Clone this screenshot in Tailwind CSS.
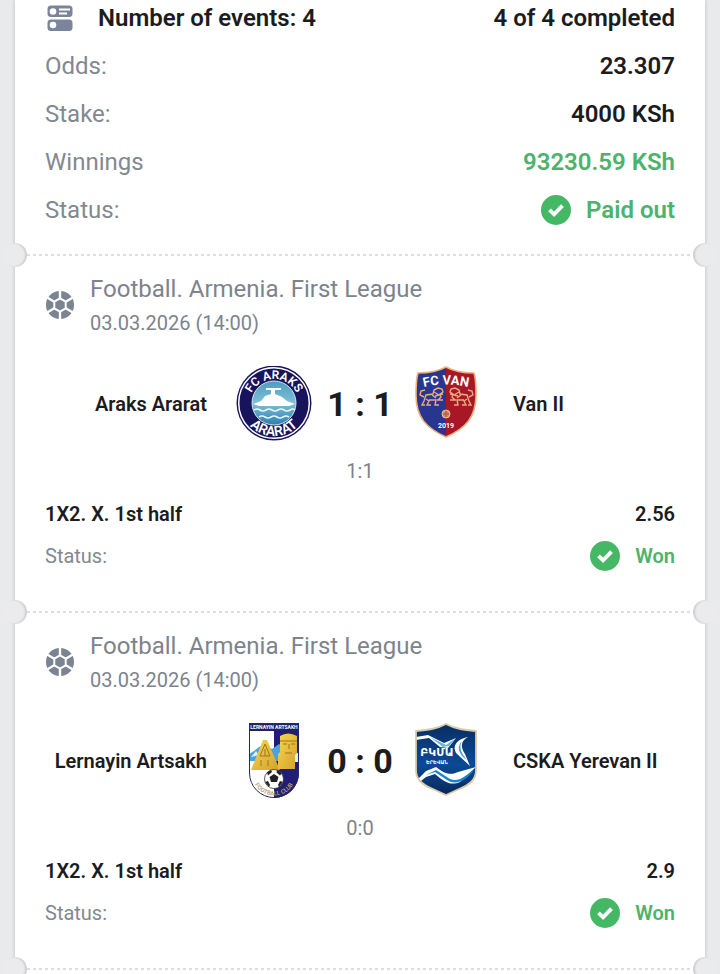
<!DOCTYPE html>
<html lang="en">

<head>
  <meta charset="UTF-8">
  <meta name="viewport" content="width=device-width, initial-scale=1.0">
  <title>Bet slip</title>
  <script src="https://cdn.jsdelivr.net/npm/@tailwindcss/browser@4"></script>
</head>

<body class="bg-[#e9eaec] font-['Roboto',sans-serif] text-[#1c1c1e]">
  <!-- Shared icons -->
  <svg class="hidden">
    <symbol id="check" viewBox="0 0 30 30">
      <circle cx="15" cy="15" r="15" fill="#45b865" />
      <path d="M8.500 14.800l4.600 4.500 8.400-8.600" fill="none" stroke="#fff" stroke-width="3.800" />
    </symbol>
    <symbol id="ball" viewBox="0 0 28 28">
      <circle cx="14" cy="14" r="14" fill="#7b8492" />
      <path d="M14 7.400l5.700 3.300v6.600L14 20.600l-5.700-3.300v-6.600z" fill="#7b8492" stroke="#fff" stroke-width="2" />
      <path d="M14 7.400V0M14 20.600V28M8.300 10.700L1.500 6.800M19.700 10.700L26.500 6.800M8.300 17.300L1.500 21.200M19.700 17.300L26.500 21.200" stroke="#fff" stroke-width="2.400" />
    </symbol>
  </svg>

  <div class="min-h-screen overflow-hidden px-[15px]">
    <main class="min-h-screen bg-white shadow-[0_0_4px_rgba(0,0,0,0.2)]">

      <!-- Summary -->
      <section class="px-[30px] pb-5 text-2xl">
        <div class="mb-[6px] flex h-9 items-center font-semibold">
          <svg class="mr-[25px] ml-[2px] h-[26px] w-[26px]" viewBox="0 0 26 26">
            <rect x="0.500" y="0.500" width="25" height="11.500" rx="3.500" fill="#7b8498" />
            <rect x="0.500" y="14.500" width="25" height="11.500" rx="3.500" fill="#7b8498" />
            <circle cx="6" cy="6.500" r="3.300" fill="#fff" />
            <circle cx="6" cy="20" r="3.300" fill="#fff" />
            <path d="M12 4.500h11M12 8.500h8" stroke="#fff" stroke-width="1.800" />
          </svg>
          <h1>Number of events: 4</h1>
          <span class="ml-auto">4 of 4 completed</span>
        </div>
        <dl>
          <div class="flex h-12 items-center justify-between">
            <dt class="text-[#83888f]">Odds:</dt>
            <dd class="font-semibold">23.307</dd>
          </div>
          <div class="flex h-12 items-center justify-between">
            <dt class="text-[#83888f]">Stake:</dt>
            <dd class="font-semibold">4000 KSh</dd>
          </div>
          <div class="flex h-12 items-center justify-between">
            <dt class="text-[#83888f]">Winnings</dt>
            <dd class="font-semibold text-[#4db36b]">93230.59 KSh</dd>
          </div>
          <div class="flex h-12 items-center justify-between">
            <dt class="text-[#83888f]">Status:</dt>
            <dd class="flex items-center gap-[15px] font-semibold text-[#4db36b]">
              <svg class="size-[30px]"><use href="#check" /></svg>
              Paid out
            </dd>
          </div>
        </dl>
      </section>

      <!-- Tear line -->
      <div class="relative px-3">
        <div class="h-[2px] bg-[repeating-linear-gradient(90deg,#dedede_0_3px,transparent_3px_6px)]"></div>
        <span class="absolute -top-[11px] -left-3 size-6 rounded-full bg-[#ebebed] shadow-[inset_-2px_0_2px_rgba(0,0,0,0.12)]"></span>
        <span class="absolute -top-[11px] -right-3 size-6 rounded-full bg-[#ebebed] shadow-[inset_2px_0_2px_rgba(0,0,0,0.12)]"></span>
      </div>

      <!-- Event 1 -->
      <section class="px-[30px] pt-4 pb-[39px] text-xl">
        <div class="flex items-center gap-4">
          <svg class="ml-px size-7"><use href="#ball" /></svg>
          <div class="text-[#7d838c]">
            <h2 class="text-2xl leading-[34px]">Football. Armenia. First League</h2>
            <p class="mt-[2px] leading-[30px]">03.03.2026 (14:00)</p>
          </div>
        </div>
        <div class="mt-7 grid grid-cols-[1fr_96px_1fr] items-center font-semibold">
          <div class="flex items-center justify-end gap-[29px]">
            <span>Araks Ararat</span>
            <svg class="size-[76px]" viewBox="0 0 76 76">
              <defs>
                <linearGradient id="lake" x1="0" y1="0" x2="0" y2="1">
                  <stop offset="0" stop-color="#4d9cc0" />
                  <stop offset="0.500" stop-color="#7fc0d6" />
                  <stop offset="1" stop-color="#2d7fb0" />
                </linearGradient>
                <path id="araksTop" d="M13.500 43a25 25 0 1 1 49 0" />
                <path id="araksBottom" d="M5 37a33 33 0 0 0 66 0" />
              </defs>
              <circle cx="38" cy="37" r="37.500" fill="#17145c" />
              <circle cx="38" cy="37" r="35.300" fill="#17145c" stroke="#fff" stroke-width="1.500" />
              <circle cx="38" cy="37" r="22" fill="url(#lake)" stroke="#cfe6f0" stroke-width="1" />
              <path d="M17 38l8-3 4-5 6-2v-4h-5v-2h15v2h-6v4l7 3 5 4 8 3-6 2H23z" fill="#fff" />
              <path d="M18 44q3-2 6 0t6 0 6 0 6 0 6 0 6 0 5 0M23 51q3-2 6 0t6 0 6 0 6 0 6 0" fill="none" stroke="#e8f6fb" stroke-width="1.600" />
              <g fill="#fff" font-size="12" font-weight="600" text-anchor="middle">
                <text><textPath href="#araksTop" startOffset="50%">FC ARAKS</textPath></text>
                <text font-size="14"><textPath href="#araksBottom" startOffset="50%">ARARAT</textPath></text>
              </g>
            </svg>
          </div>
          <strong class="text-center text-[34px] leading-10 font-bold">1 : 1</strong>
          <div class="flex items-center gap-[29px]">
            <svg class="size-[76px]" viewBox="0 0 76 76">
              <defs>
                <clipPath id="vanShield"><path d="M38 1c9 5 18 6 28 6 2 6 2 13 2 22 0 22-10 33-30 42C18 62 8 51 8 29c0-9 0-16 2-22 10 0 19-1 28-6z" /></clipPath>
                <path id="vanArc" d="M12 22q26-7 52 0" />
              </defs>
              <g clip-path="url(#vanShield)">
                <path d="M0 0h38v76H0z" fill="#28368f" />
                <path d="M38 0h38v76H38z" fill="#a81726" />
              </g>
              <path d="M38 1c9 5 18 6 28 6 2 6 2 13 2 22 0 22-10 33-30 42C18 62 8 51 8 29c0-9 0-16 2-22 10 0 19-1 28-6z" fill="none" stroke="#eeb079" stroke-width="1.600" />
              <g id="lion" fill="none" stroke="#e9aa80" stroke-width="1.400">
                <path d="M30 22l4 1 1 3-3 2 1 3-3 3M30 22l-4 2-1 4-7 1-2 6-2 4h3M26 26l5 3M27 30l8-2M29 34l6 0M18 33l3 2-2 4h4M21 34l7 0-1 5h4M16 31l-4-2 1-4 4-1M24 29l4 3" />
              </g>
              <use href="#lion" transform="matrix(-1 0 0 1 77 0)" />
              <circle cx="38" cy="48" r="4" fill="#d88d68" stroke="#efbd91" />
              <path d="M35 48h6M38 45v6" stroke="#a84f4f" />
              <g fill="#fff" font-weight="700" text-anchor="middle">
                <text font-size="13"><textPath href="#vanArc" startOffset="50%">FC VAN</textPath></text>
                <text x="38" y="62" font-size="7">2019</text>
              </g>
            </svg>
            <span>Van II</span>
          </div>
        </div>
        <p class="mt-[15px] text-center leading-7 text-[#7d838c]">1:1</p>
        <div class="mt-[15px] flex justify-between leading-7 font-semibold">
          <h3>1X2. X. 1st half</h3>
          <span>2.56</span>
        </div>
        <div class="mt-3 flex h-8 items-center justify-between">
          <span class="text-[#83888f]">Status:</span>
          <span class="flex items-center gap-[15px] font-semibold text-[#4db36b]">
            <svg class="size-[30px]"><use href="#check" /></svg>
            Won
          </span>
        </div>
      </section>

      <!-- Tear line -->
      <div class="relative px-3">
        <div class="h-[2px] bg-[repeating-linear-gradient(90deg,#dedede_0_3px,transparent_3px_6px)]"></div>
        <span class="absolute -top-[11px] -left-3 size-6 rounded-full bg-[#ebebed] shadow-[inset_-2px_0_2px_rgba(0,0,0,0.12)]"></span>
        <span class="absolute -top-[11px] -right-3 size-6 rounded-full bg-[#ebebed] shadow-[inset_2px_0_2px_rgba(0,0,0,0.12)]"></span>
      </div>

      <!-- Event 2 -->
      <section class="px-[30px] pt-4 pb-[39px] text-xl">
        <div class="flex items-center gap-4">
          <svg class="ml-px size-7"><use href="#ball" /></svg>
          <div class="text-[#7d838c]">
            <h2 class="text-2xl leading-[34px]">Football. Armenia. First League</h2>
            <p class="mt-[2px] leading-[30px]">03.03.2026 (14:00)</p>
          </div>
        </div>
        <div class="mt-7 grid grid-cols-[1fr_96px_1fr] items-center font-semibold">
          <div class="flex items-center justify-end gap-[29px]">
            <span>Lernayin Artsakh</span>
            <svg class="size-[76px]" viewBox="0 0 76 76">
              <defs>
                <clipPath id="artsakhShield"><path d="M13 0h50v50a25 25 0 0 1-50 0z" /></clipPath>
                <linearGradient id="gold" x1="0" y1="0" x2="1" y2="1">
                  <stop offset="0" stop-color="#f6d84c" />
                  <stop offset="1" stop-color="#d5a02d" />
                </linearGradient>
                <path id="clubArc" d="M16 51a22 21.500 0 0 0 44 0" />
              </defs>
              <g clip-path="url(#artsakhShield)">
                <path d="M0 0h38v76H0z" fill="#fff" />
                <path d="M38 0h38v76H38z" fill="#211d78" />
                <path d="M13 31l5-3 5-4 5-3 8 5 7-5 5 3v14H13z" fill="#45a5dc" />
                <path d="M15 34l5-6 3 4 4-8 2 7M56 26l7 5v8h-7z" fill="#d8eef8" />
                <path d="M13 0h50v8H13z" fill="#1d2266" />
              </g>
              <path d="M13.500 0.500h49V50a24.500 24.500 0 0 1-49 0z" fill="none" stroke="#24286e" />
              <path d="M15 47l12-30h4l13 30z" fill="url(#gold)" />
              <path d="M42 46V31l2-2V13q8-5 17 0v17l-2 2v14z" fill="url(#gold)" />
              <path d="M44 18h17M47 21h4M55 21h4M53 21v5M49 30h7M29 21l-5 12h10zM25 37v6M32 37v6M29 26v7" fill="none" stroke="#a17322" />
              <circle cx="38" cy="56" r="9.500" fill="#fff" stroke="#333" stroke-width="0.800" />
              <path d="M38 51l4.500 3-1.500 5h-6l-1.500-5zM31 49.500l4-2.500 1 2-4 3.500zM41 47l5 3-2 2.500-3.500-3zM29 59l3-1 2 4-1 2zM47 59l-3-1-2 4 1 2z" fill="#222" />
              <text x="38" y="6" font-size="5" font-weight="700" fill="#fff" text-anchor="middle">LERNAYIN ARTSAKH</text>
              <text font-size="6" font-weight="600" fill="#b4a26d" text-anchor="middle"><textPath href="#clubArc" startOffset="50%">FOOTBALL CLUB</textPath></text>
            </svg>
          </div>
          <strong class="text-center text-[34px] leading-10 font-bold">0 : 0</strong>
          <div class="flex items-center gap-[29px]">
            <svg class="size-[76px]" viewBox="0 0 76 76">
              <defs>
                <linearGradient id="deep" x1="0" y1="0" x2="0" y2="1">
                  <stop offset="0" stop-color="#092c60" />
                  <stop offset="0.550" stop-color="#0b4a96" />
                  <stop offset="1" stop-color="#072350" />
                </linearGradient>
                <clipPath id="cskaShield"><path d="M38 1c9 5 19 6 30 7v39c0 10-7 15-17 19l-13 6-13-6C15 62 8 57 8 47V8c11-1 21-2 30-7z" /></clipPath>
              </defs>
              <g clip-path="url(#cskaShield)">
                <path d="M0 0h76v76H0z" fill="url(#deep)" />
                <path d="M8 14l12-2 16 8 12-5-8 10-8-1-11-9-13 2z" fill="#fff" />
                <path d="M22 14l16 8 10-7-7 8-6 1z" fill="#69b4e4" />
                <path d="M60 14c-11 2-16 9-12 16l14 13-5-12c-5-8-4-13 3-17z" fill="#fff" />
                <path d="M54 18c-4 7 0 13 5 19-8-5-11-13-5-19z" fill="#469bd7" />
                <path d="M8 58l10-10 10-4c8 6 13 9 22 5l18-5-16 15c-9 4-16 0-25-8l-9 3-10 8z" fill="#fff" />
                <path d="M18 52l10-5 14 9c8 3 14-1 26-12-9 14-20 19-29 13l-12-8z" fill="#1686ce" />
              </g>
              <path d="M38 1c9 5 19 6 30 7v39c0 10-7 15-17 19l-13 6-13-6C15 62 8 57 8 47V8c11-1 21-2 30-7z" fill="none" stroke="#d9cba9" stroke-width="1.800" />
              <g fill="#fff" font-weight="700" text-anchor="middle" font-family="'DejaVu Sans', sans-serif">
                <text x="29" y="33" font-size="11">ԲԿՄԱ</text>
                <text x="29" y="41" font-size="5">ԵՐԵՎԱՆ</text>
              </g>
            </svg>
            <span>CSKA Yerevan II</span>
          </div>
        </div>
        <p class="mt-[15px] text-center leading-7 text-[#7d838c]">0:0</p>
        <div class="mt-[15px] flex justify-between leading-7 font-semibold">
          <h3>1X2. X. 1st half</h3>
          <span>2.9</span>
        </div>
        <div class="mt-3 flex h-8 items-center justify-between">
          <span class="text-[#83888f]">Status:</span>
          <span class="flex items-center gap-[15px] font-semibold text-[#4db36b]">
            <svg class="size-[30px]"><use href="#check" /></svg>
            Won
          </span>
        </div>
      </section>

      <!-- Tear line -->
      <div class="relative px-3">
        <div class="h-[2px] bg-[repeating-linear-gradient(90deg,#dedede_0_3px,transparent_3px_6px)]"></div>
        <span class="absolute -top-[11px] -left-3 size-6 rounded-full bg-[#ebebed] shadow-[inset_-2px_0_2px_rgba(0,0,0,0.12)]"></span>
        <span class="absolute -top-[11px] -right-3 size-6 rounded-full bg-[#ebebed] shadow-[inset_2px_0_2px_rgba(0,0,0,0.12)]"></span>
      </div>
    </main>
  </div>
</body>

</html>
